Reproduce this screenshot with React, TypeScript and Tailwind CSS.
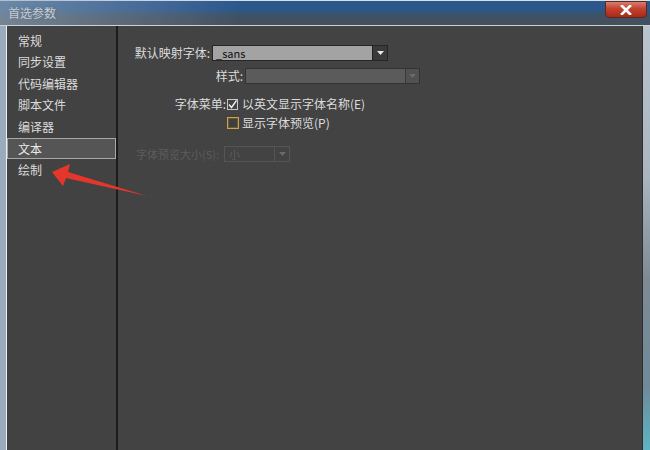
import React from 'react';

const font = { fontFamily: '"Noto Sans CJK SC", "Liberation Sans", sans-serif' };

const navItems = ['常规', '同步设置', '代码编辑器', '脚本文件', '编译器', '文本', '绘制'];

const Arrow = ({ disabled = false }: { disabled?: boolean }) => (
  <svg width="7" height="4" viewBox="0 0 7 4">
    <path d="M0 0 H7 L3.5 4 Z" fill={disabled ? '#6a6a6a' : '#e8e8e8'} />
  </svg>
);

export default function App() {
  return (
    <div
      className="relative w-[650px] h-[450px] overflow-hidden bg-[#9aabbd] text-[12px] text-[#dcdcdc]"
      style={font}
    >
      {/* title bar */}
      <div className="h-[26px] flex items-center pl-[8px] border-t border-[#d8e0e8] border-b border-b-[#c9d1d9] bg-[linear-gradient(180deg,#2c5890_0%,#2b578b_35%,#3e5266_60%,#454f5a_100%)]">
        <span className="text-[12px] text-[#f2f2f2] [text-shadow:0_0_3px_#222]">首选参数</span>
      </div>
      <div className="absolute left-0 top-0 w-[240px] h-[25px] bg-[linear-gradient(90deg,rgba(150,168,186,0.6),rgba(140,160,180,0))] pointer-events-none" />

      {/* close button */}
      <div className="absolute right-[3px] top-[1px] w-[42px] h-[17px] rounded-b-[4px] border border-[#5a2a22] bg-[linear-gradient(180deg,#d87e6e_0%,#c4412e_45%,#a82a16_100%)] flex items-center justify-center">
        <svg width="12" height="10" viewBox="0 0 12 10">
          <path d="M2 1 L10 9 M10 1 L2 9" stroke="#ffffff" strokeWidth="2.6" strokeLinecap="square" />
        </svg>
      </div>

      {/* body */}
      <div className="flex h-[424px] ml-[6px] mr-[8px] border-l border-[#e8eef4]">
        {/* sidebar */}
        <div className="w-[111px] bg-[#424242] border-r-2 border-[#1c1c1c] pt-[4px]">
          {navItems.map((item) => (
            <div
              key={item}
              className={
                item === '文本'
                  ? 'h-[21px] mt-[0.5px] flex items-center pl-[10px] bg-[#555555] border border-[#a8a8a8] text-[#ececec]'
                  : 'h-[21.5px] flex items-center pl-[11px] text-[#dcdcdc]'
              }
            >
              {item}
            </div>
          ))}
        </div>

        {/* main panel */}
        <div className="flex-1 bg-[#434343] pt-[19px]">
          <div className="flex items-center h-[16px]">
            <div className="w-[94px] text-right pr-[2px]">默认映射字体:</div>
            <div className="w-[176px] h-[16px] flex border border-[#262626]">
              <div className="flex-1 bg-[#a3a3a3] text-[#111] text-[11px] leading-[14px] pl-[3px]">_sans</div>
              <div className="w-[15px] bg-[#3a3a3a] border-l border-[#222] flex items-center justify-center">
                <Arrow />
              </div>
            </div>
          </div>

          <div className="flex items-center h-[16px] mt-[7px]">
            <div className="w-[127px] text-right pr-[2px]">样式:</div>
            <div className="w-[175px] h-[16px] flex border border-[#333]">
              <div className="flex-1 bg-[#5b5b5b]" />
              <div className="w-[14px] bg-[#515151] border-l border-[#3a3a3a] flex items-center justify-center">
                <Arrow disabled />
              </div>
            </div>
          </div>

          <div className="flex items-center h-[14px] mt-[13px]">
            <div className="w-[109px] text-right pr-[1px]">字体菜单:</div>
            <div className="w-[11px] h-[11px] border border-[#c8c8c8] flex items-center justify-center">
              <svg width="9" height="9" viewBox="0 0 9 9">
                <path d="M1 4.5 L3.5 7.5 L8.5 0.5" stroke="#f0f0f0" strokeWidth="1.4" fill="none" />
              </svg>
            </div>
            <span className="ml-[4px]">以英文显示字体名称(E)</span>
          </div>

          <div className="flex items-center h-[14px] mt-[5px]">
            <div className="w-[109px]" />
            <div className="w-[12px] h-[12px] border border-[#c9a24a] bg-[#3f3f3f] shadow-[inset_0_0_0_1px_#6a5a30]" />
            <span className="ml-[3px]">显示字体预览(P)</span>
          </div>

          <div className="flex items-center h-[16px] mt-[16px] text-[#5c5c5c]">
            <div className="w-[106px] pl-[18px] text-[11px] whitespace-nowrap">字体预览大小(S):</div>
            <div className="w-[66px] h-[16px] flex border border-[#555]">
              <div className="flex-1 pl-[4px] text-[11px] leading-[14px]">小</div>
              <div className="w-[15px] border-l border-[#555] flex items-center justify-center">
                <Arrow disabled />
              </div>
            </div>
          </div>
        </div>
      </div>

      {/* right frame shading */}
      <div className="absolute right-0 top-[26px] w-[8px] h-[424px] border-l border-[#2e2e2e] bg-[linear-gradient(180deg,#b9c3cd_0%,#a9b5c1_35%,#7d8a96_60%,#6f8a98_85%,#5fb3c4_100%)]" />

      {/* red annotation arrow */}
      <svg className="absolute left-0 top-0 pointer-events-none" width="650" height="450">
        <polygon
          points="52,172 70,164 68,172 147,196 66,178 63,186"
          fill="#e5362c"
        />
      </svg>
    </div>
  );
}
